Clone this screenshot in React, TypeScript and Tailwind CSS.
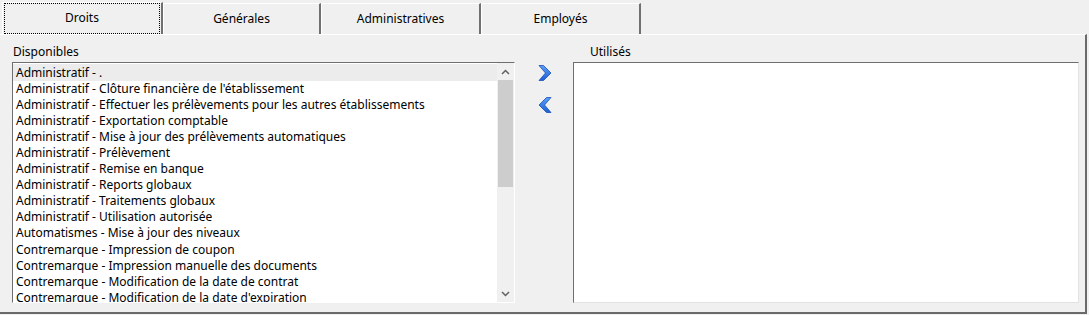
import React from 'react';

const tabs = [
  { label: 'Droits', width: 'w-[161px]', active: true },
  { label: 'Générales', width: 'w-[158px]' },
  { label: 'Administratives', width: 'w-[160px]' },
  { label: 'Employés', width: 'w-[160px]' },
];

const items = [
  'Administratif - .',
  "Administratif - Clôture financière de l'établissement",
  'Administratif - Effectuer les prélèvements pour les autres établissements',
  'Administratif - Exportation comptable',
  'Administratif - Mise à jour des prélèvements automatiques',
  'Administratif - Prélèvement',
  'Administratif - Remise en banque',
  'Administratif - Reports globaux',
  'Administratif - Traitements globaux',
  'Administratif - Utilisation autorisée',
  'Automatismes - Mise à jour des niveaux',
  'Contremarque - Impression de coupon',
  'Contremarque - Impression manuelle des documents',
  'Contremarque - Modification de la date de contrat',
  "Contremarque - Modification de la date d'expiration",
];

function Chevron({ dir }: { dir: 'right' | 'left' }) {
  return (
    <svg width="16" height="18" viewBox="0 0 16 18" className={dir === 'left' ? '-scale-x-100' : ''}>
      <defs>
        <linearGradient id={`g-${dir}`} x1="0" y1="0" x2="0" y2="1">
          <stop offset="0" stopColor="#5aa0f5" />
          <stop offset="1" stopColor="#1c5fd6" />
        </linearGradient>
      </defs>
      <path
        d="M2 1.5 L6.5 1.5 L14 9 L6.5 16.5 L2 16.5 L8.5 9 Z"
        fill={`url(#g-${dir})`}
        stroke="#1a4fb8"
        strokeWidth="0.8"
        strokeLinejoin="round"
      />
    </svg>
  );
}

export default function App() {
  return (
    <div className="w-[1089px] h-[315px] bg-[#f0f0f0] flex flex-col text-[12px] text-black font-['Noto_Sans','Open_Sans',sans-serif] overflow-hidden">
      {/* Tabs */}
      <div className="flex pl-[2px] pt-[2px] h-[34px]">
        {tabs.map((t) => (
          <div
            key={t.label}
            className={`${t.width} h-[32px] flex items-center justify-center border-t border-l border-white border-r-2 border-r-[#707070] ${t.active ? '' : 'mt-[1px]'}`}
          >
            {t.active ? (
              <div className="w-full h-full m-[1px] border border-dotted border-black flex items-center justify-center pb-[1px]">
                {t.label}
              </div>
            ) : (
              <span className="pb-[1px]">{t.label}</span>
            )}
          </div>
        ))}
      </div>

      {/* Panel */}
      <div className="flex-1 mr-[2px] mb-[1px] border-t border-white border-r-2 border-b-2 border-r-[#6a6a6a] border-b-[#6a6a6a] pt-[9px] pl-[12px]">
        <div className="grid grid-cols-[503px_58px_506px] grid-rows-[18px_241px]">
          <div className="pl-[1px] leading-[16px]">Disponibles</div>
          <div />
          <div className="pl-[17px] leading-[16px]">Utilisés</div>

          {/* Left list */}
          <div className="border-t border-l border-[#6f6f6f] border-r border-b border-r-white border-b-white flex bg-white">
            <div className="flex-1 min-w-0 overflow-hidden pt-[1px]">
              {items.map((it, i) => (
                <div
                  key={it}
                  className={`leading-[16px] pl-[3px] whitespace-nowrap ${i === 0 ? 'bg-[#ececec] h-[17px] pt-[1px]' : 'h-[16px]'} ${i === 10 ? 'h-[17px]' : ''}`}
                >
                  {it}
                </div>
              ))}
            </div>
            <div className="w-[17px] bg-[#f0f0f0] flex flex-col">
              <div className="h-[17px] flex items-center justify-center">
                <svg width="9" height="6" viewBox="0 0 9 6">
                  <path d="M1 5 L4.5 1.5 L8 5" fill="none" stroke="#606060" strokeWidth="1.5" />
                </svg>
              </div>
              <div className="mx-[1px] h-[107px] bg-[#cdcdcd]" />
              <div className="flex-1" />
              <div className="h-[17px] flex items-center justify-center">
                <svg width="9" height="6" viewBox="0 0 9 6">
                  <path d="M1 1 L4.5 4.5 L8 1" fill="none" stroke="#606060" strokeWidth="1.5" />
                </svg>
              </div>
            </div>
          </div>

          {/* Move buttons */}
          <div className="flex flex-col items-center pt-[2px] gap-[14px] pl-[1px]">
            <Chevron dir="right" />
            <Chevron dir="left" />
          </div>

          {/* Right list */}
          <div className="border-t border-l border-[#6f6f6f] border-r border-b border-r-[#e3e3e3] border-b-[#e3e3e3] bg-white" />
        </div>
      </div>
    </div>
  );
}
